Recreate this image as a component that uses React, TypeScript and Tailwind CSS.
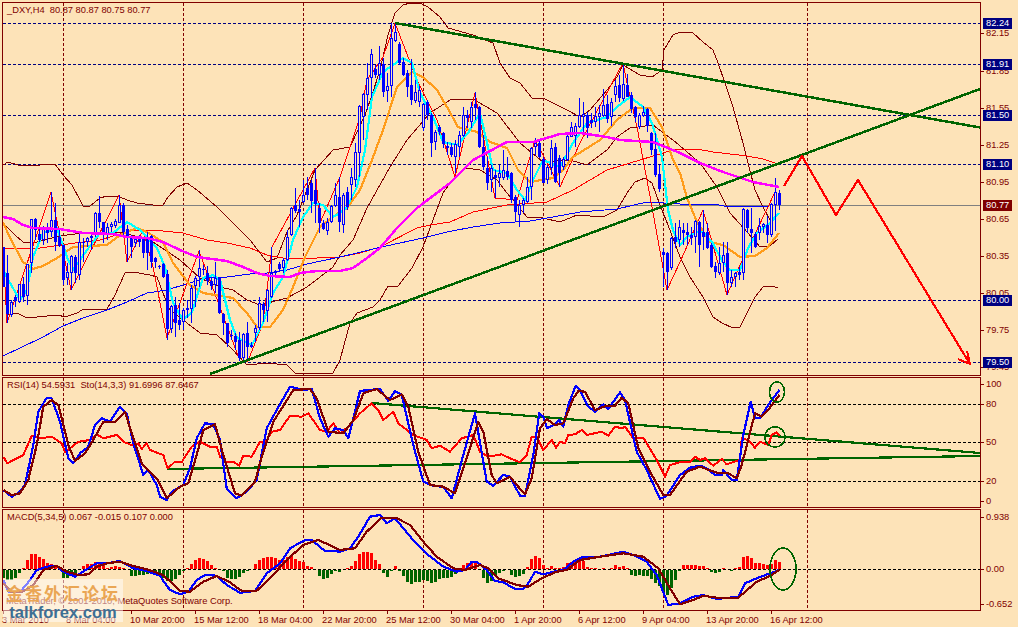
const BG = "#fde3b8";
const MAROON = "#800000";
const BLUE = "#0000ff";
const GREEN = "#006400";

type Pt = number[];
type Bar = [number, number, number, number, number];

// reads from the 3x crops: x is offset + zx/3, y is offset + zy/3
const at = (ox: number, oy: number, z: Pt[]): Pt[] => z.map(([x, y]) => [ox + x / 3, oy + y / 3]);
const pts = (p: Pt[]) => p.map(([x, y]) => `${x.toFixed(1)},${y.toFixed(1)}`).join(" ");

// [bodyTop, bodyBottom, hollow, high, low]
const barsA: Bar[] = [
  [170,290,0,170,290],[250,372,0,195,400],[335,375,1,330,380],[320,332,0,315,350],[282,337,1,282,340],
  [282,320,0,260,335],[222,317,1,222,345],[88,220,1,88,248],[88,120,0,85,150],[132,150,0,110,155],
  [110,150,1,108,165],[110,128,0,100,158],[90,125,1,5,140],[90,155,0,40,182],[140,168,0,115,170],
  [165,270,0,165,285],[245,265,1,220,285],[198,248,1,195,300],[200,250,0,195,280],[155,255,1,125,270],
  [155,160,0,145,215],[145,155,1,140,170],[138,145,0,128,180],[68,132,1,65,140],[70,95,0,18,115],
  [95,135,0,95,158],[110,135,1,100,150],[102,110,1,95,125],[92,107,1,88,115],[45,98,1,15,100],
  [45,125,0,40,135],[118,140,0,105,215],[138,170,0,135,205],[148,158,1,140,170],[148,155,0,135,170],
  [142,190,0,140,205],[140,190,0,125,240],[138,215,0,135,235],[205,215,0,200,235],[228,232,0,225,238],
  [222,262,0,220,265],[252,418,0,240,450],[348,418,1,345,430],[345,398,0,320,440],[390,405,0,340,420],
  [360,395,1,355,420],[355,360,0,330,385],[295,358,1,285,400],[265,288,1,258,350],[235,262,1,180,290],
  [238,240,0,225,255],[250,272,0,228,285],[272,288,0,262,300],[265,285,1,215,310],[265,370,0,262,372],
  [372,400,0,370,435],[400,460,0,398,470],[434,437,0,420,450],[438,455,0,430,480],[450,505,0,425,512],
  [432,505,1,428,515],[428,470,0,395,510],[465,472,1,455,475],[415,428,1,405,455],[340,415,1,322,420],
  [342,360,0,335,395],[300,362,1,298,395],[248,322,1,170,325],[247,250,0,240,265],[222,238,0,215,245],
  [210,235,1,205,250],[142,210,1,120,212],[55,135,1,50,138],[45,62,0,-5,68],[58,65,0,30,110],
  [15,35,1,-30,40],[-5,15,0,-40,30],[-20,32,0,-30,70],[0,42,0,-66,100],[55,98,0,40,130],
  [100,118,0,90,120],[95,122,1,85,135],[48,95,1,45,100],[15,48,1,-20,50],[20,95,0,-40,125],
];
const barsB: Bar[] = [
  [585,675,1,580,700],[575,620,0,560,630],[530,555,1,505,600],[455,540,1,430,560],[318,460,1,315,530],
  [282,350,1,280,420],[235,285,1,190,330],[162,235,1,148,295],[208,225,0,195,235],[190,225,1,138,240],
  [192,275,0,175,292],[258,272,1,220,305],[115,258,1,70,290],[97,122,1,72,125],[132,190,0,125,195],
  [185,225,0,175,228],[220,260,0,210,292],[255,300,0,178,315],[275,302,1,240,310],[270,305,1,258,322],
  [312,385,1,310,392],[305,345,0,300,360],[345,428,0,340,472],[395,425,1,390,450],[382,395,0,375,405],
  [400,432,0,395,445],[438,445,0,425,465],[440,465,0,430,470],[432,470,1,420,520],[405,440,1,392,470],
  [345,408,1,322,412],[345,355,0,330,385],[320,365,1,305,385],[312,325,0,275,360],[320,440,0,318,445],
  [440,502,0,405,510],[505,548,0,470,570],[505,540,1,495,575],[525,535,0,510,595],[520,535,1,495,560],
  [510,535,1,450,540],[512,530,0,470,540],[518,600,0,515,610],[590,635,0,585,665],[615,645,1,600,680],
  [600,615,1,595,640],[562,605,1,530,610],[445,560,1,440,600],[430,442,1,415,465],[430,472,0,422,475],
  [478,548,0,470,550],[500,540,1,495,552],[445,505,1,420,525],[442,545,0,430,550],[475,520,0,465,562],
  [478,500,1,470,510],[408,480,1,400,482],[380,410,1,365,412],[378,408,1,368,440],[345,380,1,293,385],
  [343,350,1,305,405],[345,385,0,335,415],[360,368,0,340,385],[348,365,1,320,380],[338,350,1,315,395],
  [315,348,1,268,352],[312,358,0,285,368],[305,350,1,295,378],[258,285,1,240,305],[255,295,0,225,305],
  [252,298,1,190,302],[255,290,0,222,292],[285,328,0,275,340],[322,350,0,318,365],[345,380,1,340,388],
  [335,348,1,318,350],[328,378,0,325,395],[398,450,0,395,465],[448,525,0,400,530],[522,568,0,495,575],
  [755,765,0,745,860],[760,815,0,755,870],[715,805,1,710,810],[712,725,0,670,745],[680,720,1,660,740],
];
const barsC: Bar[] = [
  [120,130,0,100,165],[125,135,0,100,165],[135,145,0,110,165],[92,140,1,90,190],[95,165,0,92,230],
  [125,140,0,60,180],[125,175,0,100,178],[165,232,0,160,235],[228,245,0,215,265],[220,248,1,172,255],
  [195,218,1,155,245],[190,280,0,155,315],[262,278,1,240,290],[250,260,1,245,290],[245,255,0,230,270],
  [58,248,1,55,270],[60,115,0,58,130],[118,128,0,55,190],[132,172,0,125,175],[108,130,1,85,150],
  [103,112,1,100,130],[105,135,0,78,158],[42,135,1,38,140],[5,45,1,-35,122],[10,45,0,0,60],
];
const page = (oy: number) => ([t, b, h, hi, lo]: Bar): Bar => [oy + t / 3, oy + b / 3, h, oy + hi / 3, oy + lo / 3];
const bars: Bar[] = [...barsA.map(page(190)), ...barsB.map(page(0)), ...barsC.map(page(190))];

const upper: Pt[] = [[3,165],[8,162],[18,165],[40,165],[55,164],[63,175],[72,185],[80,200],[83,206],[90,206],[100,198],[107,196],[120,197],[127,200],[137,203],[153,205],[163,205],[168,197],[177,187],[187,183],[197,190],[217,207],[233,223],[250,240],[267,262],[277,258],[287,232],[297,215],[305,195],[315,170],[333,150],[350,147],[358,130],[365,115],[372,95],[380,70],[388,35],[395,13],[403,5],[410,3],[420,3],[428,7],[440,17],[448,28],[473,35],[493,43],[500,63],[510,78],[520,83],[532,98],[543,98],[557,105],[567,110],[580,117],[590,110],[607,90],[617,77],[623,65],[640,75],[652,77],[662,70],[664,50],[673,35],[680,32],[693,33],[703,42],[713,50],[718,63],[725,83],[733,107],[743,143],[748,163],[755,190],[763,207],[770,220]];
const middle: Pt[] = [[3,223],[15,235],[23,242],[33,243],[60,236],[90,232],[120,232],[150,240],[180,260],[200,278],[220,287],[233,290],[247,300],[260,305],[287,298],[307,287],[333,267],[340,255],[353,240],[367,208],[390,167],[407,140],[430,113],[450,100],[473,99],[497,113],[520,143],[543,162],[570,160],[587,165],[607,150],[617,137],[630,128],[653,125],[673,140],[700,163],[717,187],[730,213],[748,233],[760,247],[770,246],[778,239]];
const lower: Pt[] = [[7,315],[17,313],[27,318],[37,317],[58,315],[65,317],[77,313],[82,310],[107,309],[115,295],[125,273],[133,272],[150,275],[157,277],[163,293],[170,310],[187,323],[200,333],[217,335],[230,347],[247,365],[267,363],[287,365],[295,373],[333,373],[340,360],[350,323],[357,313],[373,307],[380,300],[388,286],[398,286],[412,268],[423,247],[433,220],[443,193],[455,177],[465,168],[480,170],[497,180],[507,193],[513,200],[527,217],[543,218],[560,222],[577,215],[603,217],[617,210],[627,193],[635,182],[645,178],[652,183],[660,205],[668,225],[680,257],[690,277],[703,297],[713,317],[722,323],[733,328],[740,327],[747,313],[755,297],[763,287],[772,286],[778,288]];
const redMa: Pt[] = [[3,248],[20,248],[40,248],[75,243],[100,240],[133,230],[163,231],[183,233],[207,240],[227,243],[250,248],[267,255],[283,258],[317,258],[340,257],[360,253],[380,247],[417,228],[430,225],[450,222],[473,212],[507,205],[547,202],[573,190],[607,170],[640,160],[673,150],[697,149],[713,152],[730,154],[747,156],[763,159],[778,164]];
const blueMa: Pt[] = [[3,356],[20,348],[43,337],[63,326],[83,318],[107,310],[127,302],[147,293],[167,290],[183,285],[207,278],[227,277],[250,274],[267,273],[287,270],[307,264],[340,257],[357,253],[377,248],[423,238],[447,232],[473,227],[500,223],[530,221],[553,217],[580,212],[617,209],[647,202],[680,204],[713,204],[730,207],[770,206]];
const magenta: Pt[] = [[3,217],[13,219],[23,225],[33,228],[60,229],[83,233],[113,234],[127,237],[147,238],[163,242],[180,250],[197,257],[227,261],[243,267],[257,273],[270,276],[290,277],[300,273],[317,271],[340,271],[353,268],[367,258],[380,248],[397,228],[417,208],[450,183],[473,160],[507,142],[533,142],[560,134],[580,133],[607,137],[620,140],[653,142],[668,148],[680,153],[700,163],[723,172],[753,182],[779,187]];
const cyan: Pt[] = [[3,270],[10,283],[20,300],[27,290],[33,257],[43,233],[57,228],[67,257],[73,270],[87,250],[100,233],[113,233],[127,222],[140,230],[157,248],[165,267],[173,303],[183,320],[192,312],[203,278],[213,275],[220,280],[230,320],[237,338],[252,345],[263,323],[273,293],[283,277],[293,240],[303,217],[313,203],[323,205],[333,217],[340,213],[347,207],[357,187],[365,150],[372,97],[383,72],[403,58],[412,63],[420,93],[433,117],[443,142],[457,145],[468,133],[480,113],[488,147],[493,170],[507,173],[517,190],[525,200],[533,180],[543,160],[560,167],[573,143],[587,123],[607,117],[617,107],[630,97],[643,107],[652,123],[662,157],[668,210],[673,230],[680,245],[687,237],[697,232],[703,232],[712,242],[723,262],[730,270],[740,270],[748,248],[757,233],[770,223],[779,213]];
const orange: Pt[] = [[3,222],[10,238],[23,262],[33,269],[43,266],[57,258],[73,247],[90,246],[107,245],[120,235],[137,228],[147,232],[163,242],[173,263],[190,285],[203,293],[233,298],[247,313],[257,327],[270,327],[283,310],[293,287],[305,257],[320,227],[340,212],[347,208],[360,190],[372,160],[383,130],[397,87],[412,72],[423,77],[437,90],[447,107],[458,127],[477,132],[490,142],[507,148],[518,170],[530,182],[553,178],[563,170],[573,157],[600,140],[617,120],[633,108],[650,108],[662,127],[673,160],[680,173],[687,198],[697,222],[710,242],[723,245],[740,257],[755,256],[767,248],[779,233]];
const zigzag: Pt[] = [[3,250],[7,323],[51,192],[71,290],[119,195],[127,262],[143,230],[153,267],[167,338],[199,251],[240,361],[248,361],[263,323],[272,247],[315,168],[320,223],[340,177],[360,117],[367,80],[383,57],[395,23],[417,80],[437,120],[455,177],[475,93],[495,198],[517,200],[535,140],[560,187],[580,143],[603,100],[623,63],[627,83],[637,127],[652,207],[667,290],[680,262],[703,210],[727,295],[740,265],[752,240],[768,207],[775,192]];
const arrow: Pt[] = [[784,186],[802,156],[836,215],[858,180],[970,364]];

const rsi: Pt[] = [...at(0,375,[[10,245],[22,265],[50,250],[70,240],[95,182],[120,190],[155,185],[185,205],[195,232],[235,200],[270,195],[290,178],[310,190],[350,180],[370,200],[400,212],[415,205],[425,222],[440,205],[450,225],[490,240],[503,280],[525,260],[545,262],[555,245],[575,215],[600,200],[630,215],[650,215],[660,245],[680,262],[700,260],[718,272],[730,242],[755,245],[780,200],[795,205],[815,170],[840,165],[870,122],[905,125],[925,115],[960,165],[980,170],[1000,145],[1020,175],[1045,155],[1080,115],[1115,85],[1135,105],[1150,135],[1180,110],[1195,145],[1240,180],[1280,195],[1295,220],[1320,212],[1350,230],[1385,190],[1420,180],[1440,230],[1465,245],[1505,238],[1530,250]]),...at(510,375,[[30,262],[50,240],[65,185],[80,185],[100,225],[125,195],[138,218],[150,200],[165,205],[175,180],[195,178],[215,165],[230,180],[275,170],[295,182],[315,155],[335,160],[345,155],[370,190],[400,188],[440,255],[465,305],[480,270],[510,262],[540,260],[555,245],[570,255],[585,250],[610,272],[635,252],[650,268],[690,255],[695,190],[715,195],[735,218],[750,200],[775,210],[785,180],[800,172],[810,182]])];
const stoch: Pt[] = [...at(0,375,[[10,345],[35,365],[55,355],[75,330],[100,210],[115,110],[140,68],[155,70],[180,140],[205,250],[220,265],[240,235],[265,215],[285,150],[305,130],[330,140],[360,95],[380,115],[400,205],[430,300],[445,285],[470,330],[480,365],[500,375],[515,350],[550,330],[570,280],[590,190],[615,145],[640,148],[660,195],[680,340],[710,370],[740,350],[770,315],[800,160],[830,105],[870,35],[910,45],[935,42],[960,130],[985,185],[1005,160],[1030,165],[1045,190],[1080,48],[1105,45],[1140,42],[1165,78],[1185,48],[1205,60],[1240,210],[1270,320],[1300,333],[1330,335],[1355,370],[1390,240],[1425,115],[1460,320],[1480,332],[1510,300]]),...at(510,375,[[0,305],[30,362],[45,362],[70,240],[88,115],[100,125],[112,160],[130,150],[148,135],[160,155],[175,90],[197,32],[210,45],[235,95],[255,110],[280,88],[295,102],[330,52],[345,75],[380,230],[410,285],[450,372],[470,362],[510,300],[540,278],[570,272],[590,280],[615,300],[635,300],[640,285],[665,315],[680,315],[700,180],[722,80],[735,130],[750,130],[775,90],[808,45]])];
const signal: Pt[] = [...at(0,375,[[10,345],[35,360],[60,355],[85,315],[110,210],[130,95],[155,75],[175,90],[205,210],[225,258],[255,235],[280,195],[310,140],[345,140],[375,110],[395,175],[425,265],[470,310],[500,370],[540,335],[565,325],[590,240],[610,165],[645,148],[670,240],[705,355],[725,362],[765,320],[785,245],[820,140],[880,45],[930,42],[950,70],[985,170],[1030,175],[1060,135],[1090,55],[1130,42],[1170,75],[1205,58],[1225,95],[1255,230],[1290,330],[1330,335],[1365,355],[1400,250],[1435,140],[1450,170],[1475,300],[1490,325]]),...at(510,375,[[0,305],[20,330],[45,358],[65,310],[90,160],[110,132],[135,150],[160,145],[190,70],[205,48],[225,50],[255,105],[290,92],[315,92],[335,68],[355,85],[385,220],[420,290],[460,360],[480,360],[530,290],[570,275],[625,295],[655,295],[680,310],[695,270],[735,115],[755,125],[775,105],[808,60]])];

const macd: Pt[] = [...at(0,505,[[10,225],[25,260],[60,262],[90,225],[110,195],[140,185],[170,183],[190,200],[225,215],[260,193],[290,175],[320,175],[360,168],[400,190],[440,198],[480,212],[495,235],[510,255],[540,268],[565,260],[590,225],[615,210],[650,212],[680,240],[720,263],[765,258],[800,205],[840,175],[870,130],[915,105],[935,105],[975,138],[1000,138]]),...at(340,505,[[0,140],[30,130],[55,95],[90,35],[120,30],[140,55],[165,40],[215,100],[265,150],[310,185],[350,200],[375,195],[395,170],[410,170],[440,195],[465,228],[490,232],[525,252],[550,252],[565,235],[585,200],[610,208],[640,200],[670,195],[700,170],[730,155],[780,155],[850,140],[880,150],[920,170],[950,210],[985,300]]),...at(680,505,[[0,295],[40,275],[70,270],[110,282],[175,275],[195,235],[230,220],[270,205],[298,195]])];
const macdSignal: Pt[] = [...at(0,505,[[10,235],[35,262],[65,262],[100,240],[130,195],[170,183],[200,200],[235,210],[265,208],[290,185],[320,175],[360,170],[400,183],[440,193],[490,210],[540,258],[570,260],[610,230],[650,213],[690,232],[725,258],[770,257],[810,220],[860,165],[910,120],[955,105],[1000,125]]),...at(340,505,[[0,135],[45,130],[80,80],[125,38],[170,40],[210,60],[250,110],[290,155],[340,190],[375,195],[420,180],[445,190],[475,220],[530,240],[565,245],[605,220],[650,200],[680,195],[720,165],[780,155],[850,145],[910,155],[955,190],[990,250]]),...at(680,505,[[0,298],[40,285],[70,272],[110,278],[175,278],[230,230],[270,213],[298,195]])];
// osma bars, one per candle, red above the zero line and green below
const hist = [-8,-10,-10,-8,-3,1,9,15,15,12,10,6,5,3,0,-8,-8,-6,-5,0,3,5,5,7,7,4,1,2,3,2,1,0,-6,-6,-5,-5,-4,-3,-4,-5,-8,-11,-11,-9,-5,-1,1,5,9,11,10,8,4,1,0,-1,-8,-9,-9,-7,-3,-1,0,5,9,11,12,12,11,9,9,12,13,10,8,7,3,2,0,-6,-9,-8,-4,-1,-2,
  0,1,3,8,15,17,17,16,9,5,-3,-7,-1,3,-1,-6,-12,-14,-12,-12,-10,-11,-13,-12,-9,-8,-8,-7,-4,-1,4,6,7,6,0,-8,-13,-11,-6,-3,-1,0,-5,-7,-6,-4,2,10,13,11,4,1,3,1,1,2,6,7,7,9,8,2,1,1,0,1,0,1,4,2,3,1,-5,-6,-5,-6,-6,-9,-13,-16,-23,-25,-18,-10,-1,
  4,4,4,4,3,3,1,-2,-3,-2,1,0,-1,1,2,12,13,11,6,6,5,4,5,9,7];

const gridX = [63, 183, 303, 423, 543, 663, 807];
const priceTicks: [string, number][] = [["82.15",33],["81.85",71],["81.55",108],["81.25",145],["80.95",182],["80.65",219],["80.35",256],["80.05",293],["79.75",330],["79.45",367]];
const priceTags: [string, number, string][] = [["82.24",23,"bg-[#000080]"],["81.91",64,"bg-[#000080]"],["81.50",115,"bg-[#000080]"],["81.10",164,"bg-[#000080]"],["80.77",205,"bg-[#800000]"],["80.00",300,"bg-[#000080]"],["79.50",362,"bg-[#000080]"]];
const times: [string, number][] = [["3 Mar 2010",3],["8 Mar 04:00",67],["10 Mar 20:00",131],["15 Mar 12:00",195],["18 Mar 04:00",259],["22 Mar 20:00",323],["25 Mar 12:00",387],["30 Mar 04:00",451],["1 Apr 20:00",515],["6 Apr 12:00",579],["9 Apr 04:00",643],["13 Apr 20:00",707],["16 Apr 12:00",771]];

function Line({ p, c, w = 1 }: { p: Pt[]; c: string; w?: number }) {
  return <polyline points={pts(p)} fill="none" stroke={c} strokeWidth={w} strokeLinejoin="round" />;
}

function Grid({ top, bottom, levels, color }: { top: number; bottom: number; levels: number[]; color: string }) {
  return (
    <g strokeWidth={1} strokeDasharray="3 2">
      {gridX.map((x) => (
        <line key={x} x1={x + 0.5} x2={x + 0.5} y1={top} y2={bottom} stroke={MAROON} />
      ))}
      {levels.map((y) => (
        <line key={y} x1={3} x2={980} y1={y + 0.5} y2={y + 0.5} stroke={color} />
      ))}
    </g>
  );
}

function Candles() {
  return (
    <g>
      {bars.map(([t, b, hollow, hi, lo], i) => {
        const x = 2 + 4 * i;
        const top = Math.round(t);
        const h = Math.max(1, Math.round(b) - top);
        return (
          <g key={i}>
            <rect x={x + 1} y={Math.round(hi)} width={1} height={Math.round(lo) - Math.round(hi)} fill={BLUE} />
            {hollow ? (
              <rect x={x + 0.5} y={top + 0.5} width={2} height={Math.max(h - 1, 1)} fill={BG} stroke={BLUE} strokeWidth={1} />
            ) : (
              <rect x={x} y={top} width={3} height={h} fill={BLUE} />
            )}
          </g>
        );
      })}
    </g>
  );
}

function Pane({ top, height, legend, axis, children }: { top: number; height: number; legend: string; axis: React.ReactNode; children: React.ReactNode }) {
  const inner = height - 2;
  return (
    <div className="flex" style={{ height }}>
      <div className="relative w-[979px] shrink-0 border border-[#800000]">
        <svg width={977} height={inner} viewBox={`3 ${top + 1} 977 ${inner}`} shapeRendering="crispEdges" className="block">
          {children}
        </svg>
        <span className="absolute left-[4px] top-[2px] whitespace-pre leading-[11px]">{legend}</span>
      </div>
      <div className="relative flex-1">{axis}</div>
    </div>
  );
}

function Tick({ label, y, top }: { label: string; y: number; top: number }) {
  return (
    <div className="absolute left-0 flex h-[11px] items-center gap-[2px] leading-[11px]" style={{ top: y - top - 5 }}>
      <span className="h-px w-[3px] bg-[#800000]" />
      <span>{label}</span>
    </div>
  );
}

function PriceAxis() {
  return (
    <>
      {priceTicks.map(([label, y]) => (
        <Tick key={label} label={label} y={y} top={2} />
      ))}
      {priceTags.map(([label, y, bg]) => (
        <div key={label} className={`absolute left-[2px] h-[11px] w-[29px] pl-[3px] leading-[11px] text-white ${bg}`} style={{ top: y - 2 - 5 }}>
          {label}
        </div>
      ))}
    </>
  );
}

export default function App() {
  return (
    <div className="relative h-[627px] w-[1018px] overflow-hidden bg-[#fde3b8] pl-[2px] pt-[2px] font-['Liberation_Sans',sans-serif] text-[9.3px] text-[#800000]">
      <div className="flex flex-col gap-px">
        <Pane top={2} height={374} legend="_DXY,H4  80.87 80.87 80.75 80.77" axis={<PriceAxis />}>
          <Grid top={3} bottom={375} levels={[23, 64, 115, 164, 300, 362]} color="#000080" />
          <line x1={3} x2={980} y1={205.5} y2={205.5} stroke="#808080" />
          <Line p={upper} c={MAROON} />
          <Line p={middle} c={MAROON} />
          <Line p={lower} c={MAROON} />
          <Line p={redMa} c="#ff0000" />
          <Line p={blueMa} c={BLUE} />
          <Line p={zigzag} c="#ff0000" />
          <Line p={orange} c="#ff9c1a" w={2.2} />
          <Line p={cyan} c="#00ffff" w={2.2} />
          <Candles />
          <Line p={magenta} c="#ff00ff" w={2.5} />
          <Line p={[[395, 23], [980, 127.5]]} c={GREEN} w={2.5} />
          <Line p={[[210, 374], [980, 89]]} c={GREEN} w={2.5} />
          <Line p={arrow} c="#ff0000" w={2.2} />
          <Line p={[[958, 359], [970, 364], [967, 351]]} c="#ff0000" w={2} />
        </Pane>

        <Pane
          top={377}
          height={131}
          legend="RSI(14) 54.5931  Sto(14,3,3) 91.6996 87.6467"
          axis={
            <>
              <Tick label="100" y={384} top={377} />
              <Tick label="80" y={404} top={377} />
              <Tick label="50" y={442} top={377} />
              <Tick label="20" y={481} top={377} />
              <Tick label="0" y={501} top={377} />
            </>
          }
        >
          <Grid top={378} bottom={507} levels={[404, 442, 481]} color="#000000" />
          <Line p={[[167, 469], [980, 456]]} c={GREEN} w={2.2} />
          <Line p={[[372, 403], [980, 453]]} c={GREEN} w={2.2} />
          <Line p={rsi} c="#ff0000" w={2} />
          <Line p={stoch} c={BLUE} w={2.2} />
          <Line p={signal} c={MAROON} w={2.2} />
          <ellipse cx={777} cy={392} rx={7.5} ry={10} fill="none" stroke={GREEN} strokeWidth={1.6} />
          <ellipse cx={775} cy={437} rx={10} ry={10} fill="none" stroke={GREEN} strokeWidth={1.6} />
        </Pane>

        <Pane
          top={509}
          height={102}
          legend="MACD(5,34,5) 0.067 -0.015 0.107 0.000"
          axis={
            <>
              <Tick label="0.938" y={517} top={509} />
              <Tick label="0.00" y={569} top={509} />
              <Tick label="-0.652" y={604} top={509} />
            </>
          }
        >
          <Grid top={510} bottom={610} levels={[569]} color="#000000" />
          {hist.map((v, i) =>
            v === 0 ? null : (
              <rect key={i} x={2 + 4 * i} y={v > 0 ? 569 - v : 570} width={3} height={Math.abs(v)} fill={v > 0 ? "#ff0000" : GREEN} />
            ),
          )}
          <Line p={macd} c={BLUE} w={2.2} />
          <Line p={macdSignal} c={MAROON} w={2.2} />
          <ellipse cx={783} cy={569} rx={13} ry={21} fill="none" stroke={GREEN} strokeWidth={1.6} />
        </Pane>
      </div>

      <div className="relative h-[16px] w-[979px]">
        {times.map(([label, x]) => (
          <div key={label} className="absolute top-0 whitespace-nowrap" style={{ left: x - 3 }}>
            <span className="absolute left-[1px] top-0 h-[3px] w-px bg-[#800000]" />
            <span className="absolute left-0 top-[4px] leading-[11px]">{label}</span>
          </div>
        ))}
      </div>

      <span className="absolute left-[6px] top-[596px] whitespace-nowrap leading-[11px]">MetaTrader, © 2001-2010, MetaQuotes Software Corp.</span>

      <div className="absolute left-[3px] top-[579px] flex h-[43px] w-[120px] flex-col items-center bg-white/50 pt-[3px]">
        <span className="whitespace-nowrap font-['Noto_Sans_CJK_SC',sans-serif] text-[17px] font-bold leading-[22px] tracking-[2px] text-[#eaa654]">金香外汇论坛</span>
        <span className="mt-[-2px] text-[16.5px] font-bold leading-[20px] text-[#3d6f94]">talkforex.com</span>
      </div>
    </div>
  );
}
